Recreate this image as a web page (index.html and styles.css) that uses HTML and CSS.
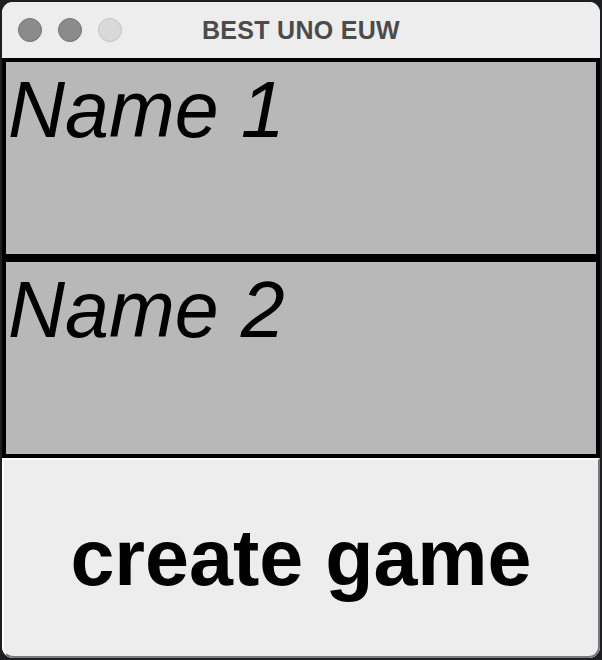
FILE: index.html
```html
<!DOCTYPE html>
<html>
<head>
<meta charset="utf-8">
<link rel="stylesheet" href="styles.css">
</head>
<body>
<div class="window">
  <div class="titlebar">
    <div class="lights">
      <span class="light dim"></span>
      <span class="light dim"></span>
      <span class="light off"></span>
    </div>
    <div class="title">BEST UNO EUW</div>
  </div>
  <div class="field"><span class="name">Name 1</span></div>
  <div class="field"><span class="name">Name 2</span></div>
  <div class="button">create game</div>
</div>
</body>
</html>
```

FILE: styles.css
```css
html, body {
  margin: 0;
  padding: 0;
  background: #1d1e21;
  width: 602px;
  height: 660px;
  overflow: hidden;
}

.window {
  margin: 2px 2px 0 2px;
  width: 598px;
  height: 656px;
  border-radius: 11px;
  overflow: hidden;
  background: #ededed;
  display: flex;
  flex-direction: column;
}

.titlebar {
  height: 56px;
  flex: none;
  position: relative;
  display: flex;
  align-items: center;
  justify-content: center;
  background: #ededed;
}

.lights {
  position: absolute;
  left: 16px;
  top: 16px;
  display: flex;
  gap: 16px;
}

.light {
  width: 22px;
  height: 22px;
  border-radius: 50%;
  display: block;
}

.light.dim {
  background: #8b8b8b;
  border: 1px solid #737373;
}

.light.off {
  background: #d9d9d9;
  border: 1px solid #c3c3c3;
}

.title {
  font-family: "Liberation Sans", Arial, sans-serif;
  font-weight: bold;
  font-size: 25px;
  color: #4b4b4b;
  letter-spacing: 0.3px;
}

.field {
  height: 200px;
  box-sizing: border-box;
  flex: none;
  border: 4px solid #000;
  background: #b8b8b8;
  padding-left: 2px;
  padding-top: 2px;
}

.name {
  font-family: "Liberation Sans", Arial, sans-serif;
  font-style: italic;
  font-size: 79px;
  line-height: normal;
  color: #000;
}

.button {
  flex: 1;
  box-sizing: border-box;
  border-top: 2px solid #ffffff;
  border-left: 2px solid #ffffff;
  border-right: 2px solid #7a7a7a;
  border-bottom: 2px solid #7a7a7a;
  border-bottom-left-radius: 11px;
  border-bottom-right-radius: 11px;
  background: #ededed;
  display: flex;
  align-items: center;
  justify-content: center;
  font-family: "Liberation Sans", Arial, sans-serif;
  font-weight: bold;
  font-size: 79px;
  color: #000;
}
```
